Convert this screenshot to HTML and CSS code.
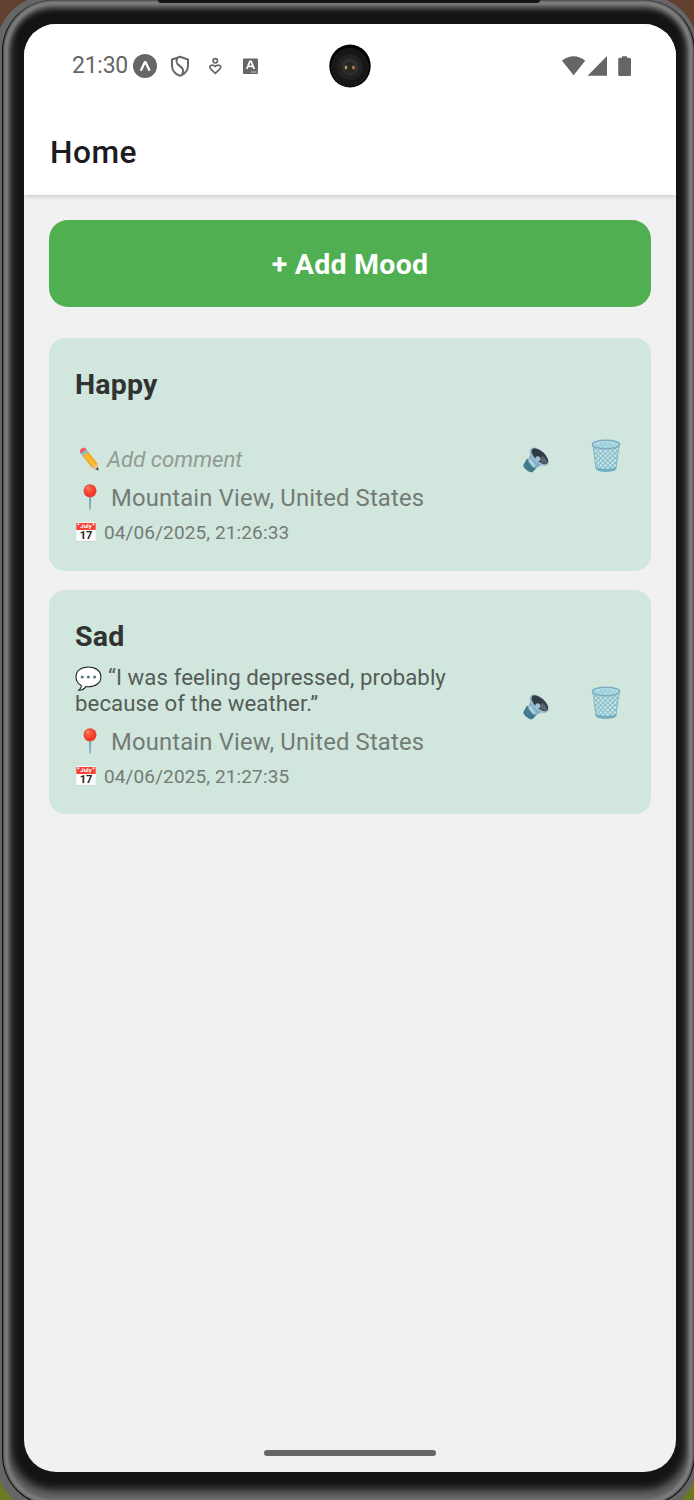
FILE: index.html
```html
<!DOCTYPE html>
<html lang="en">
<head>
<meta charset="utf-8">
<title>Home</title>
<link rel="stylesheet" href="styles.css">
</head>
<body>
<svg class="defs" width="0" height="0" aria-hidden="true">
  <defs>
    <linearGradient id="pencilBody" x1="0" x2="1"><stop offset="0" stop-color="#f79329"/><stop offset=".4" stop-color="#ffd22e"/><stop offset="1" stop-color="#f79c24"/></linearGradient>
    <radialGradient id="pinHead" cx=".4" cy=".35"><stop offset="0" stop-color="#ff6a50"/><stop offset="1" stop-color="#ee3828"/></radialGradient>
    <pattern id="mesh" width="4.8" height="4.8" patternUnits="userSpaceOnUse"><path d="M0 0 4.8 4.8M4.8 0 0 4.8" stroke="#7fb6ca" stroke-width="1.1"/></pattern>
    <symbol id="pencil" viewBox="0 0 24 26">
      <g transform="translate(4 4.200) rotate(-38)">
        <path d="M-3 4h7v16l-3.500 6L-3 20z" fill="url(#pencilBody)"/><path d="M-.5 5v15M2 5v15" stroke="#f6a423" stroke-width=".6"/>
        <path d="M-3 20l1.800-1 1.700 1 1.700-1L4 20 .5 26z" fill="#e8bf8a"/><path d="M-1.100 23.200h3.200L.5 26.300z" fill="#37474f"/>
        <path d="M-3 0q3.500-3.500 7 0v3h-7z" fill="#f35b5f"/><path d="M-3 2h7v3h-7z" fill="#82bdd0"/>
      </g>
    </symbol>
    <symbol id="pin" viewBox="0 0 14 27">
      <path d="M5.900 12h2.400L7.800 24.500l-.7 2-.7-2z" fill="#77aabd"/><circle cx="7" cy="6.800" r="6.500" fill="url(#pinHead)"/><ellipse cx="4.700" cy="4" rx="1.700" ry="1.200" transform="rotate(-35 4.700 4)" fill="#ff8e78"/>
    </symbol>
    <symbol id="calendar" viewBox="0 0 20 20">
      <rect x=".3" y=".3" width="19.400" height="19.400" rx=".8" fill="#fcfcfc"/><path d="M.3 8V1h19.400v7z" fill="#f44336"/><circle cx="2.400" cy="2.300" r="1" fill="#fff"/><circle cx="17.500" cy="2.300" r="1" fill="#fff"/><path d="M.4 19.400h19.200" stroke="#c5ccd0" stroke-width=".8"/>
    </symbol>
    <symbol id="speech" viewBox="0 0 27 26">
      <path d="M13.300 1C6 1 1 4.900 1 10.800c0 4 2.100 7.100 5.300 8.600.2 2-.9 3.500-2.500 4.800 3.400.1 5.600-1.500 7-3.600l2.500.1c7.500 0 12.600-3.900 12.600-9.800S20.800 1 13.300 1z" fill="#fff" stroke="#242424" stroke-width="1.100"/><g fill="#5b7582"><circle cx="7.200" cy="11" r="1.550"/><circle cx="13.400" cy="11" r="1.550"/><circle cx="19.600" cy="11" r="1.550"/></g>
    </symbol>
    <symbol id="speaker" viewBox="0 0 26 26">
      <path d="M4 11.500 13.500 21 9.700 25C7 26.500-.3 20.800.4 18z" fill="#437b8c"/>
      <path d="M5 13 8.300 5.500 18.500 18l-6 3.500C9.500 20.500 6 17 5 13z" fill="#7faabf"/>
      <path d="m7.300 11 5.500 7.500-2.300 2-5-6.500z" fill="#a9d1df"/>
      <ellipse cx="16.200" cy="9.800" rx="11.600" ry="6.300" transform="rotate(43 16.200 9.800)" fill="#9bbad0"/>
      <ellipse cx="16.800" cy="9.200" rx="10.300" ry="5" transform="rotate(43 16.800 9.200)" fill="#303b46"/>
      <path d="m16 13.500 3.500-5c3.500 3 5.500 6.500 4.300 8-1.800.7-4.800-.7-7.800-3z" fill="#566570"/><circle cx="14.800" cy="11.700" r="2.500" fill="#9ac4d4"/>
    </symbol>
    <symbol id="bin" viewBox="0 0 30 34">
      <path d="M2 5 5 29.500c.7 4 19.300 4 20 0L28 5z" fill="#d3ede7"/><path d="M2 5 5 29.500c.7 4 19.300 4 20 0L28 5z" fill="url(#mesh)"/>
      <path d="M4.700 28c4 2.500 16.600 2.500 20.600 0l-.3 2c-1 3.600-19 3.600-20 0z" fill="#68adc2"/><path d="M2 6 5 29.500c.7 3.600 19.300 3.600 20 0L28 6" fill="none" stroke="#83b3c4"/>
      <ellipse cx="15" cy="5.500" rx="13.600" ry="4.200" fill="#b5e2e9" stroke="#7eacbf" stroke-width="1.500"/><ellipse cx="15" cy="6" rx="12" ry="3" fill="url(#mesh)" opacity=".6"/>
    </symbol>
  </defs>
</svg>
<div class="desktop">
  <div class="device">
    <main class="screen">
      <header class="header">
        <div class="status">
          <time class="clock">21:30</time>
          <svg class="notices" width="126" height="26" viewBox="0 0 126 26">
            <circle cx="12" cy="13" r="12" fill="#666"/><path d="m7.800 17.800 4-8.600h.8l4 8.600" fill="none" stroke="#fff" stroke-width="2.300" stroke-linejoin="round"/>
            <g fill="none" stroke="#666" stroke-width="2"><path d="m47 3.800 8 2.700v6.200c0 4.500-3 8.200-8 10.200-5-2-8-5.700-8-10.200V6.500z"/><path d="M44.500 5.200c-2.300 3.500-.9 5.400 2.200 7.700 3.400 2.500 4.500 4.400 2.500 8.400"/></g>
            <g fill="none" stroke="#666" stroke-width="1.700"><circle cx="82.300" cy="7.800" r="2.200"/><path d="m82.300 20.300-4.700-4.500c-2.300-2.600 1.500-5.500 4.700-2.300 3.200-3.200 7-.3 4.700 2.300z"/></g>
            <rect x="110" y="5.500" width="15" height="15.500" rx="1" fill="#666"/><path d="m113.700 16 3.200-7.500h1.200l3.200 7.500m-6.400-2.600h5" stroke="#fff" stroke-width="1.800" fill="none"/><path d="M118 19h1.300m.8 0h1.300m.8 0h1.300" stroke="#fff" stroke-width="1.200"/>
          </svg>
          <svg class="signals" width="70" height="22" viewBox="0 0 70 22">
            <path d="M0 5.700C6.500-.3 16.700-.3 23.200 5.700L11.600 20.200zM45 1v19.800H25.600zM60 1.200h5v1.600h2.300q1.700 0 1.700 1.500v15.200q0 1.500-1.700 1.500h-9.600q-1.500 0-1.500-1.500V4.300q0-1.500 1.500-1.500H60z" fill="#666"/>
          </svg>
        </div>
        <h1 class="title">Home</h1>
        <span class="camera"><svg width="42" height="44" viewBox="0 0 42 44"><ellipse cx="21" cy="22" rx="20.700" ry="21.500" fill="#020202"/><ellipse cx="21" cy="23.500" rx="19" ry="19.500" fill="#171717"/><circle cx="21" cy="23" r="13" fill="#222"/><circle cx="21" cy="23" r="8.500" fill="#303030"/><circle cx="21" cy="23.500" r="5.500" fill="#29251f"/><ellipse cx="17" cy="23.500" rx="1.300" ry="2" fill="#a39a54"/><ellipse cx="24.500" cy="23.500" rx="1.500" ry="2" fill="#ae7554"/></svg></span>
      </header>
      <section class="content">
        <button class="add">+ Add Mood</button>
        <article class="card happy">
          <div class="info">
            <h2 class="mood">Happy</h2>
            <p class="prompt"><svg width="24" height="26"><use href="#pencil"/></svg><i>Add comment</i></p>
            <p class="place"><svg width="14" height="27"><use href="#pin"/></svg><span>Mountain View, United States</span></p>
            <p class="date"><span class="calendar"><svg width="20" height="20"><use href="#calendar"/></svg><b class="month">July</b><b class="day">17</b></span><span>04/06/2025, 21:26:33</span></p>
          </div>
          <div class="actions"><svg width="26" height="26"><use href="#speaker"/></svg><svg width="30" height="34"><use href="#bin"/></svg></div>
        </article>
        <article class="card sad">
          <div class="info">
            <h2 class="mood">Sad</h2>
            <p class="comment"><svg width="27" height="26"><use href="#speech"/></svg>“I was feeling depressed, probably<br>because of the weather.”</p>
            <p class="place"><svg width="14" height="27"><use href="#pin"/></svg><span>Mountain View, United States</span></p>
            <p class="date"><span class="calendar"><svg width="20" height="20"><use href="#calendar"/></svg><b class="month">July</b><b class="day">17</b></span><span>04/06/2025, 21:27:35</span></p>
          </div>
          <div class="actions"><svg width="26" height="26"><use href="#speaker"/></svg><svg width="30" height="34"><use href="#bin"/></svg></div>
        </article>
      </section>
      <div class="homebar"></div>
    </main>
  </div>
</div>
</body>
</html>
```
FILE: styles.css
```css
* { box-sizing: border-box; }
body { margin: 0; font-family: Roboto, sans-serif; }
h1, h2, p { margin: 0; }
svg { display: block; flex: none; }
.defs { position: absolute; }
.desktop { position: relative; width: 694px; height: 1500px; overflow: hidden; background: linear-gradient(#61402f 0 50%, #6b7a22 50%); }
.desktop::before { content: ""; position: absolute; inset: -5px -4px -14px -4px; border-radius: 54px; background: #666; }
.desktop::after { content: ""; position: absolute; top: 0; left: 158px; width: 382px; height: 3px; background: #141414; border-radius: 0 0 5px 5px; }
.device { position: relative; margin-left: 2px; width: 693px; height: 1506px; padding: 24px 19px 34px 21px; border: 1px solid #111; border-top-width: 0; border-radius: 51px; background: #141414; box-shadow: inset 0 0 2px 1px #444, inset 0 0 3px 5px #808080, inset 0 4px 5px 5px #606060, inset 0 -8px 9px 7px #666; }
.screen { position: relative; display: flex; flex-direction: column; width: 652px; height: 1448px; overflow: hidden; border-radius: 32px; background: #f1f1f1; }
.header { position: relative; height: 171px; flex: none; background: #fff; box-shadow: 0 1px 5px #0003; }
.status { display: flex; align-items: center; height: 83px; padding: 0 44px 0 48px; color: #666; }
.clock { width: 61px; font-size: 23px; letter-spacing: -.25px; }
.signals { margin-left: auto; }
.camera { position: absolute; left: 305px; top: 20px; }
.title { padding: 27px 0 0 26px; font-size: 31.700px; line-height: 38px; font-weight: 500; letter-spacing: .5px; color: #1c1b1e; }
.content { padding: 25px 25px 0; }
.add { display: block; width: 602px; height: 87px; margin-bottom: 31px; padding: 2px 0 0; border: 0; border-radius: 19px; background: #4faf51; color: #fff; font: 700 28.500px/34px Roboto, sans-serif; letter-spacing: .25px; }
.card { display: flex; justify-content: space-between; width: 602px; padding: 29px 30px 0 26px; border-radius: 16px; background: #d1e6dc; }
.happy { height: 233px; margin-bottom: 19px; }
.sad { height: 224px; }
.mood { font-size: 28.500px; line-height: 36px; letter-spacing: .2px; color: #303331; }
.prompt { display: flex; align-items: center; gap: 5px; margin: 43px 0 12px 3px; height: 26px; color: #929b96; font-size: 22.200px; }
.comment { margin: 9px 0 12px; font-size: 22.200px; line-height: 26px; letter-spacing: .08px; color: #555c58; white-space: nowrap; }
.comment svg { display: inline-block; vertical-align: -4px; margin: -2px 6px -3px 0; }
.place { display: flex; align-items: center; gap: 14px; height: 27px; margin: 0 0 10px 8px; color: #747b77; font-size: 23.800px; letter-spacing: .17px; }
.date { display: flex; align-items: center; gap: 7px; height: 22px; margin-left: 1px; color: #747b77; font-size: 19px; letter-spacing: .12px; }
.calendar { position: relative; width: 21px; height: 20px; letter-spacing: 0; }
.month, .day { position: absolute; left: 0; width: 20px; text-align: center; line-height: 1; }
.month { top: 1px; color: #fff; font-size: 6px; }
.day { top: 8px; color: #222; font-size: 11px; }
.actions { display: flex; align-items: flex-start; gap: 42px; padding-top: 72px; }
.actions svg:first-child { margin-top: 8px; }
.sad .actions { padding-top: 67px; }
.homebar { width: 172px; height: 6px; border-radius: 3px; background: #666; margin: auto auto 16px; }
```
